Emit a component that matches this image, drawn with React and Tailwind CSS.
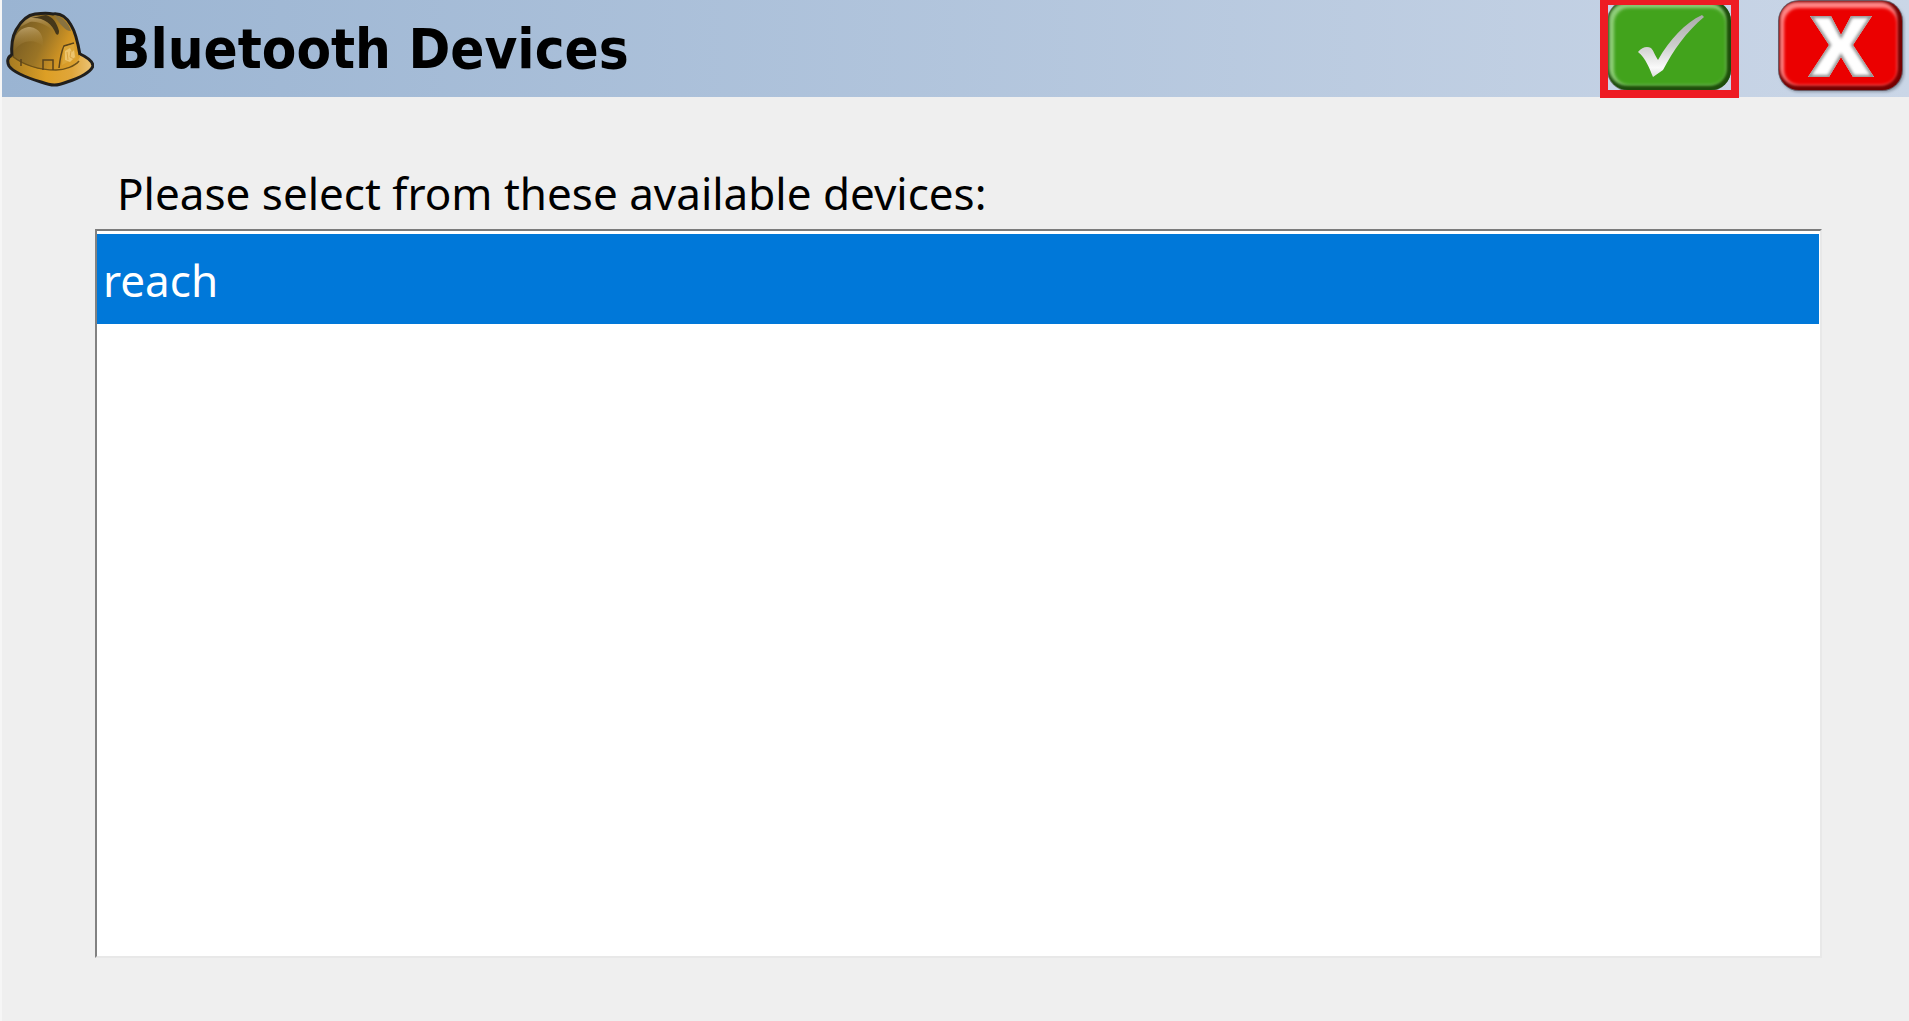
import React, { useState } from 'react';

const devices = ['reach'];

const HardHatIcon = () => (
    <svg className="w-[92px] h-[92px] flex-shrink-0 self-start" viewBox="2 0 92 92" aria-hidden="true">
        <defs>
            <linearGradient id="shell" x1="0" y1="0.2" x2="1" y2="0.6">
                <stop offset="0" stopColor="#6f5622" />
                <stop offset="0.5" stopColor="#9a7425" />
                <stop offset="0.8" stopColor="#d09424" />
                <stop offset="1" stopColor="#dca02c" />
            </linearGradient>
            <linearGradient id="brim" x1="0" y1="0" x2="1" y2="0">
                <stop offset="0" stopColor="#a47a22" />
                <stop offset="0.45" stopColor="#dd9f25" />
                <stop offset="0.75" stopColor="#e0a63a" />
                <stop offset="1" stopColor="#ecc477" />
            </linearGradient>
            <linearGradient id="shine" x1="0.3" y1="0" x2="0.5" y2="1">
                <stop offset="0" stopColor="#c8ad77" stopOpacity="0.8" />
                <stop offset="1" stopColor="#a07a2c" stopOpacity="0" />
            </linearGradient>
        </defs>
        <path
            d="M12 55C7 57 7 62 9 66C13 72 28 78 41 82C52 86 57 86 67 82C79 78 90 73 93 66C93 61 87 57 78 53Z"
            fill="url(#brim)"
            stroke="#211f1c"
            strokeWidth="3"
            strokeLinejoin="round"
        />
        <path
            d="M12 56C11 46 12 37 16 30C21 21 27 15 35 14C43 13 49 13 53 14C61 13 67 18 71 25C76 33 78 43 80 57C77 64 67 69 56 70C40 71 22 65 12 56Z"
            fill="url(#shell)"
        />
        <path
            d="M12 57C11 46 12 37 16 30C21 21 27 15 35 14C43 13 49 13 53 14C61 13 67 18 71 25C76 33 78 43 80 55"
            fill="none"
            stroke="#211f1c"
            strokeWidth="3"
        />
        <path d="M14 51C12 36 20 27 30 27C40 28 44 37 43 46C35 39 22 39 14 51Z" fill="url(#shine)" />
        <path d="M20 27C26 17 35 15 42 17C50 20 55 27 57 35C49 26 40 21 30 22Z" fill="url(#shine)" />
        <path d="M31 18C43 17 52 23 56 34C58 36 59 34 59 31C57 23 53 17 46 15Z" fill="#463719" />
        <path d="M54 15C63 17 69 24 71 31C67 32 60 25 54 15Z" fill="#89723f" />
        <path d="M12 56C25 66 40 70 56 70C65 70 75 66 79 61" fill="none" stroke="#6e5117" strokeWidth="1.5" />
        <path d="M21 59V66M43 70V60H53V70M59 68C60 59 61 52 64 46L74 43" fill="none" stroke="#59431b" strokeWidth="1.5" />
        <path d="M64 47L74 44L76 58L62 65Z" fill="#dba638" />
        <path d="M65 51L70 48L72 52L74 50L75 57L70 62L65 60Z" fill="#edc46d" />
        <path d="M67 52L68 60M71 51L70 57L74 59" fill="none" stroke="#d9a340" strokeWidth="1" />
    </svg>
);

const CheckIcon = () => (
    <svg className="block w-[123px] h-[85px]" viewBox="0 0 123 85" aria-hidden="true">
        <defs>
            <linearGradient id="check" x1="0" y1="0" x2="0" y2="1">
                <stop offset="0" stopColor="#aaa" />
                <stop offset="0.5" stopColor="#cecece" />
                <stop offset="0.85" stopColor="#fafafa" />
                <stop offset="1" stopColor="#ddd" />
            </linearGradient>
            <filter id="softGreen" x="-10%" y="-10%" width="120%" height="120%">
                <feGaussianBlur stdDeviation="1.5" />
            </filter>
            <clipPath id="greenClip">
                <rect x="0" y="-4" width="123" height="89" rx="20" />
            </clipPath>
        </defs>
        <rect width="123" height="85" fill="#c8d5e8" />
        <rect x="-1" y="-5" width="124" height="91" rx="21" fill="#667464" />
        <g clipPath="url(#greenClip)">
            <rect y="-4" width="123" height="89" fill="#1c4d0b" />
            <rect x="1" y="-2" width="117" height="82" rx="17" fill="#8fce7a" filter="url(#softGreen)" />
            <rect x="6" y="3" width="112" height="77" rx="15" fill="#42a31c" filter="url(#softGreen)" />
        </g>
        <path
            d="M30 47C34 42 39 41 43 43C46 46 47 51 50 55C62 34 77 18 94 10L96 12C78 27 65 46 55 65L45 72C42 65 38 53 30 47Z"
            fill="url(#check)"
        />
    </svg>
);

const CloseIcon = () => (
    <svg className="block w-[130px] h-[96px]" viewBox="0 0 130 96" aria-hidden="true">
        <defs>
            <filter id="softRed" x="-10%" y="-10%" width="120%" height="120%">
                <feGaussianBlur stdDeviation="1.5" />
            </filter>
            <clipPath id="redClip">
                <rect x="3" y="1" width="123" height="89" rx="20" />
            </clipPath>
            <clipPath id="crossClip">
                <path d="M34 16H55L65 35L75 16H96L77 45L98 77H77L65 57L53 77H32L53 45Z" />
            </clipPath>
        </defs>
        <rect x="4" y="3" width="124" height="89" rx="20" fill="#8995a5" filter="url(#softRed)" />
        <rect x="2" y="0" width="125" height="91" rx="21" fill="#6a5963" />
        <g clipPath="url(#redClip)">
            <rect x="3" y="1" width="123" height="89" fill="#750000" />
            <rect x="4" y="2" width="117" height="83" rx="17" fill="#ff8585" filter="url(#softRed)" />
            <rect x="8" y="8" width="113" height="77" rx="15" fill="#eb0000" filter="url(#softRed)" />
        </g>
        <g clipPath="url(#crossClip)">
            <rect x="30" y="14" width="70" height="66" fill="#fff" />
            <path
                d="M34 16H55L65 35L75 16H96L77 45L98 77H77L65 57L53 77H32L53 45Z"
                fill="none"
                stroke="#909090"
                strokeWidth="4"
                filter="url(#softRed)"
            />
        </g>
    </svg>
);

const App = () => {
    const [selected, setSelected] = useState('reach');

    return (
        <div className="min-h-screen flex flex-col bg-[#efefef] border-l-2 border-[#f6f6f6] text-black font-['Noto_Sans',sans-serif]">
            <header className="flex items-start h-[97px] pr-[3px] bg-linear-to-r from-[#9ab4d2] to-[#cad6e7]">
                <div className="flex flex-1 items-center h-full">
                    <HardHatIcon />
                    <h1 className="ml-[18px] text-[56px] leading-[64px] font-bold font-['DejaVu_Sans_Condensed','Noto_Sans',sans-serif]">
                        Bluetooth Devices
                    </h1>
                </div>
                <div className="flex items-start gap-[37px]">
                    <button
                        type="button"
                        aria-label="Accept"
                        className="border-x-8 border-t-5 border-b-8 border-[#ee1c24] cursor-pointer"
                    >
                        <CheckIcon />
                    </button>
                    <button type="button" aria-label="Cancel" className="cursor-pointer">
                        <CloseIcon />
                    </button>
                </div>
            </header>

            <main className="flex flex-1 flex-col pt-16 pb-[63px] pl-[93px] pr-[87px]">
                <label htmlFor="devices" className="pl-[22px] text-[44px] leading-[64px] mb-1">
                    Please select from these available devices:
                </label>
                <select
                    id="devices"
                    size={8}
                    value={selected}
                    onChange={(e) => setSelected(e.target.value)}
                    className="flex-1 w-full pt-[3px] pr-px bg-white bg-none border-2 border-t-[#7b7b7b] border-l-[#828282] border-r-[#e8e8e8] border-b-[#e8e8e8] rounded-none outline-none appearance-none overflow-hidden text-[44px]"
                >
                    {devices.map((name) => (
                        <option
                            key={name}
                            value={name}
                            className="h-[90px] px-[6px] py-4 checked:bg-linear-to-r checked:from-[#0078d9] checked:to-[#0078d9] checked:[-webkit-text-fill-color:#fff]"
                        >
                            {name}
                        </option>
                    ))}
                </select>
            </main>
        </div>
    );
};

export default App;
